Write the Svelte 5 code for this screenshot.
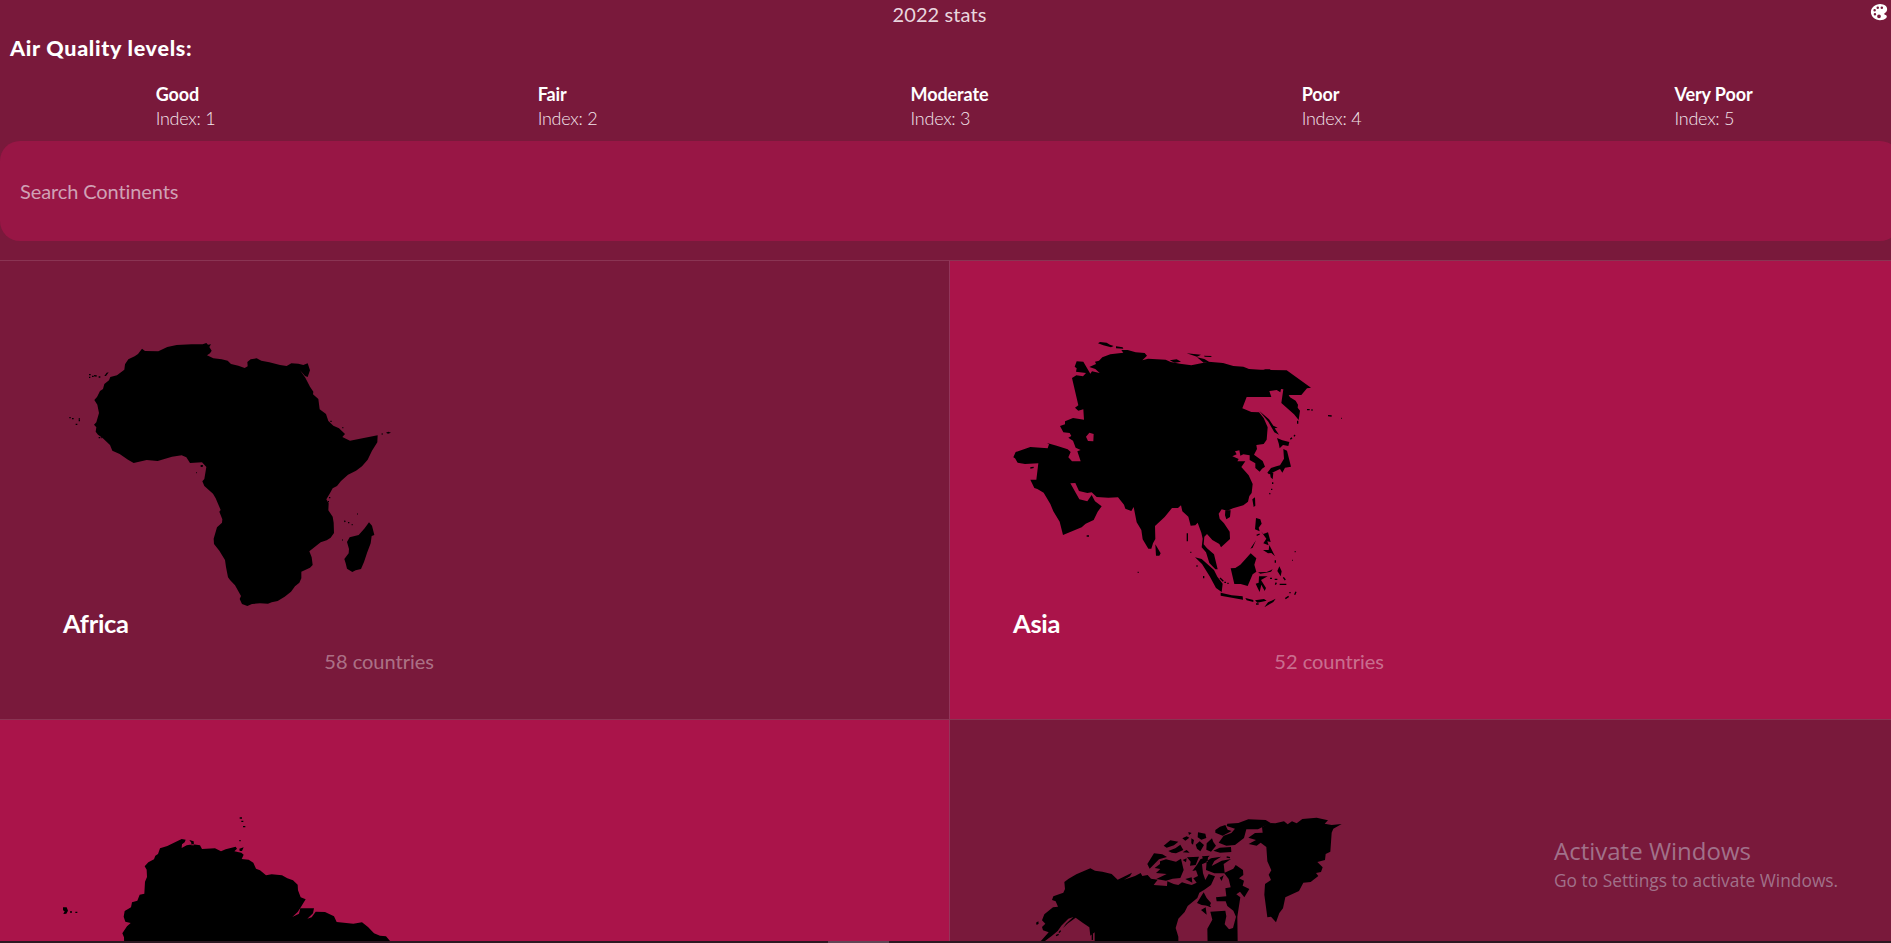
<script>
  const levels = [
    { name: 'Good', index: 1 },
    { name: 'Fair', index: 2 },
    { name: 'Moderate', index: 3 },
    { name: 'Poor', index: 4 },
    { name: 'Very Poor', index: 5 },
  ];

  const africa =
    'M276 56L285 63L325 64L352 51L380 45L425 43L458 43L469 39L474 44L483 43L478 51L485 62L480 70L471 76L490 85L515 88L533 92L543 102L565 107L584 114L593 109L592 96L602 88L620 85L634 92L658 97L690 105L710 108L724 100L745 101L760 105L773 100L780 121L773 141L765 138L750 121L766 143L780 170L790 185L789 193L805 207L809 238L828 252L835 273L850 287L867 295L885 312L877 321L900 332L930 326L983 316L982 337L966 362L953 389L936 409L918 422L894 434L873 453L861 468L848 475L839 491L829 508L836 520L835 541L848 560L851 578L852 609L842 623L830 631L812 637L778 664L785 682L788 705L780 713L754 725L754 745L748 758L735 769L723 785L704 800L683 813L665 817L654 821L630 820L606 822L592 828L576 822L569 807L573 798L555 766L540 750L534 742L528 711L525 690L508 662L492 642L491 626L501 592L516 578L517 568L508 545L512 540L497 505L489 491L463 468L457 454L463 447L469 411L456 397L420 399L409 382L395 376L366 380L323 393L290 390L251 399L234 389L209 372L187 362L180 345L157 323L144 314L137 305L139 292L132 284L139 277L147 249L142 224L133 210L141 201L150 183L159 177L163 162L177 151L181 141L201 136L223 119L225 103L235 88L254 79L264 72ZM957 577L966 587L973 615L965 618L962 640L951 669L942 696L933 717L917 721L907 726L891 716L887 700L883 687L896 670L897 657L891 636L899 622L926 615L944 595ZM1008 308L1015 305L1023 308L1014 311ZM163 138L170 128L176 127L168 138ZM452 405l7 0l-1 6l-6 0z';
  const africaSpecks =
    'M117 134h5M117 142h4M126 139h5M132 137l8 1M146 141h5M58 263h4M66 266h5M86 267h4M86 272h4M77 283h5M995 312h3M841 274h4M877 293h3M146 323h5M154 323h3M439 428h2M837 503h4M834 515h3M883 572l3 3M894 578h4M905 584h3M922 552h2M877 630h2';

  const asia =
    'M860 121L933 173L921 175L904 195L866 195L870 202L887 212L894 224L893 233L900 242L896 270L882 253L844 219L850 178L843 177L841 187L830 180L808 183L814 201L740 201L727 235L754 246L777 247L791 264L803 292L800 329L791 342L769 345L771 357L762 374L788 393L795 410L786 416L779 425L766 414L766 400L749 390L749 376L730 373L721 377L718 361L705 364L710 373L697 379L716 387L712 394L736 394L724 411L746 436L758 462L755 489L748 498L744 515L730 526L699 535L682 542L665 538L656 551L659 566L672 580L689 605L690 627L663 652L658 642L637 630L621 612L613 620L611 643L621 655L642 673L653 718L646 718L628 699L618 667L605 652L608 626L604 608L593 578L586 586L572 587L565 560L547 544L543 526L534 534L516 534L494 561L465 588L466 627L459 640L454 656L445 656L428 628L424 600L410 577L401 531L394 543L376 536L372 524L354 502L325 503L290 501L275 487L262 489L237 483L226 459L211 460L238 508L262 514L275 495L285 514L305 529L293 545L281 570L257 581L245 592L189 615L179 575L160 544L151 522L131 488L112 477L103 474L91 449L109 449L115 400L75 402L53 398L45 385L40 382L47 366L91 351L143 355L147 343L141 339L170 347L203 358L212 366L205 382L216 394L242 394L232 364L242 360L227 353L219 332L205 323L214 318L209 309L190 307L180 288L195 283L195 274L219 264L252 269L250 238L235 242L225 233L235 226L216 144L229 136L249 139L258 129L228 125L230 115L224 110L230 94L250 95L271 131L276 124L299 129L286 117L268 111L288 102L285 95L297 92L307 82L331 73L370 68L364 60L383 60L407 67L434 69L441 77L427 91L444 86L497 89L512 96L540 101L574 106L611 98L625 95L669 99L700 108L730 110L747 117L781 119ZM258 320L268 308L281 312L280 334L264 333Z';
  const asiaIslands =
    'M294 40L300 36L320 38L330 44L341 48L333 52L310 46ZM348 49L368 52L370 56L348 55ZM509 91L530 88L543 95L524 98ZM560 70L603 74L591 80ZM612 77L636 78L632 81L614 80ZM591 82L613 87L627 95L611 98ZM790 118L811 118L810 125ZM778 243L807 268L820 287L833 293L824 295L837 314L823 307L805 275ZM831 324L847 331L868 336L865 348L849 345L839 355L836 340ZM850 357L861 362L873 410L855 413L847 428L840 417L807 433L802 428L813 414L829 409L840 406L852 386ZM810 430l10 -2l-2 20l-6 -6zM757 508l8 -6l1 25l-5 4zM676 541l16 0l-2 20l-11 7l-4 -12zM768 564L781 568L785 581L776 593L779 604L765 598ZM783 604L790 612L804 607L812 636L802 634L806 646L790 640L799 626ZM768 631L751 656L758 653ZM808 645L825 679L814 669L804 670L789 660L806 660ZM466 643L482 670L478 677L468 677ZM585 682L605 687L642 720L652 740L668 761L665 786L648 774L629 739L606 702ZM662 788L695 796L728 799L729 809L704 805L662 797ZM752 670L769 685L763 704L769 725L758 733L743 768L722 762L703 762L692 715L706 714L721 704L736 688ZM774 727L800 726L818 718L813 725L781 731ZM777 739L803 739L783 750L798 774L794 783L784 764L779 786L774 776L767 761L776 758ZM736 804L760 810L760 816L740 811ZM765 811L792 807L800 812L772 818ZM793 832L804 817L827 806L820 816ZM838 709l7 15l-3 15l-10 -16z';
  const asiaSpecks =
    'M921 239h8M934 240h4M984 257l11 1M1023 265h2M871 328l5 -5M882 319l3 -4M893 272v9M91 414l10 -2M260 618h7M413 727h3M818 457v5M815 476v4M808 492l3 -2M571 667h3M589 708h4M611 738v7M562 610v24M660 744l10 10M673 757h5M682 760h4M884 665h3M876 691h2M826 691v7M810 745h6M824 748h8M829 758l-3 6M839 763h20M850 742l6 8M856 806l10 -7M868 788h4M888 785l-4 9M768 822h8M770 616l9 -4';

  const southAmerica =
    'M425 117L437 119L434 127L426 133L425 144L440 136L459 133L480 136L486 147L525 145L543 154L557 148L587 140L591 146L583 154L604 158L611 164L605 177L626 179L640 188L648 206L660 211L678 226L695 223L726 226L742 235L759 241L773 254L774 271L782 292L797 298L781 324L773 336L757 351L777 341L781 325L822 325L819 340L802 356L815 352L827 335L855 336L882 349L890 366L940 371L966 367L984 381L1002 400L1020 407L1038 409L1050 423L1050 500L254 500L252 412L247 400L261 379L272 369L256 365L251 350L254 333L273 322L276 307L292 302L299 284L313 281L315 245L321 231L320 209L314 199L325 187L342 178L346 167L354 162L360 145L382 138ZM448 120L461 124L462 136L454 136L454 128ZM598 146L611 142L606 153L599 153ZM69 322L80 322L84 332L79 341L70 342L74 334L69 331Z';
  const southSpecks = 'M599 54h7M604 64h6M609 80h7M598 122h4M90 336h6M106 337h6';

  const northAmerica =
    'M211 205L225 212L247 215L275 222L293 239L310 231L336 218L330 229L312 239L345 228L362 219L367 228L383 225L393 236L413 239L401 255L441 258L442 244L461 252L475 255L486 247L500 251L515 255L530 248L520 235L534 228L528 211L517 213L532 193L541 178L564 169L563 185L546 193L549 220L556 240L566 222L585 229L573 255L553 269L538 278L532 294L503 318L494 336L475 356L467 384L475 410L476 500L224 500L224 397L211 407L208 382L189 369L167 353L144 370L129 384L138 371L160 351L145 356L124 377L113 393L95 408L70 427L62 424L86 397L69 391L66 381L76 371L66 361L73 343L99 322L114 320L107 304L96 300L100 289L130 278L135 267L133 246L146 236L169 223Z M571 335L616 332L619 349L614 373L627 388L639 384L648 350L640 332L622 318L617 304L590 304L588 292L619 289L616 265L632 262L626 237L613 220L583 220L558 210L560 184L573 175L603 170L583 183L575 198L605 182L633 177L611 192L614 218L640 206L647 195L669 210L670 225L657 235L672 242L668 257L688 267L673 292L660 275L649 283L661 292L652 350L654 500L564 500L562 386L577 359ZM747 69L766 70L792 64L803 73L816 64L830 70L847 57L890 53L924 61L914 71L935 75L965 72L940 86L935 98L931 155L917 162L915 180L892 186L908 202L903 216L888 219L895 228L872 246L850 248L837 273L796 292L789 325L778 339L768 367L753 350L742 352L733 284L735 252L753 240L746 224L754 211L742 184L739 141L722 128L710 137L686 132L708 120L685 113L705 99L728 98L726 82Z';
  const northIslands =
    'M655 69L685 58L737 60L752 69L714 88L679 88L672 114L645 135L619 137L596 128L611 107L634 99L645 86L620 78L622 71ZM586 90L600 80L616 75L623 89L635 93L608 107L586 98ZM382 192L402 160L427 163L441 171L417 178L389 206ZM420 184L438 178L468 185L483 176L491 210L481 234L458 236L438 242L409 237L440 222L408 219L421 207L404 204L420 192ZM431 137L451 121L475 125L462 136L440 143ZM445 153L466 145L481 134L490 150L468 160L455 158ZM487 115L500 109L508 113L496 122ZM514 115L522 120L519 134L514 130ZM534 97L556 101L559 114L544 119L533 112ZM527 134L539 124L552 135L541 154L531 146ZM488 157L500 150L509 158ZM560 130L576 115L580 126L588 137L573 155L559 149ZM599 143L633 141L634 156L600 158L580 152ZM501 172L537 170L527 195L510 197L512 185ZM546 169L569 167L552 184ZM496 237L515 232L517 248ZM551 277L560 294L573 309L569 318L545 315L531 309ZM543 330L557 322L560 344ZM599 233L611 226L605 243ZM488 180l12 -5l-2 12zM505 96l10 3l-8 6zM48 368l7 -4l1 7l-6 4z';
  const northSpecks = 'M108 407l8 -4M117 398l5 -6M217 400v20M560 315l12 5M620 171l10 2';

  const continents = [
    { name: 'Africa', countries: 58, box: '39 0 1041 831', land: africa, islands: '', specks: africaSpecks },
    { name: 'Asia', countries: 52, box: '39 0 1041 831', land: asia, islands: asiaIslands, specks: asiaSpecks },
    { box: '69 -33 1041 831', land: southAmerica, islands: '', specks: southSpecks },
    { box: '-21 -33 1041 831', land: northAmerica, islands: northIslands, specks: northSpecks },
  ];
</script>

<div class="screen">
  <div class="page">
    <header>
      <span class="stats">2022 stats</span>
      <svg class="palette" viewBox="0 0 512 512" aria-hidden="true">
        <path d="M441 336.2l-.06-.05c-9.93-9.18-22.78-11.34-32.16-12.92l-.69-.12c-9.05-1.49-10.48-2.5-14.58-6.17-2.44-2.17-5.35-5.65-5.35-9.94s2.91-7.77 5.34-9.94l30.28-26.87c25.92-22.91 40.2-53.66 40.2-86.59s-14.25-63.68-40.2-86.6c-35.89-31.59-85-49-138.37-49C223.72 48 162 71.37 116 112.11c-43.87 38.77-68 90.71-68 146.24s24.16 107.47 68 146.23c21.75 19.24 47.49 34.18 76.52 44.42a266.17 266.17 0 0086.87 15h1.81c61 0 119.09-20.57 159.39-56.4 9.7-8.56 15.15-20.83 15.34-34.56.21-14.17-5.37-27.95-14.93-36.84zM112 208a32 32 0 1132 32 32 32 0 01-32-32zm40 135a32 32 0 1132-32 32 32 0 01-32 32zm40-199a32 32 0 1132 32 32 32 0 01-32-32zm64 271a48 48 0 1148-48 48 48 0 01-48 48zm72-239a32 32 0 1132-32 32 32 0 01-32 32z" />
      </svg>
    </header>

    <h1>Air Quality levels:</h1>
    <ul class="levels">
      {#each levels as level}
        <li>
          <div>
            <strong>{level.name}</strong>
            <span>Index: {level.index}</span>
          </div>
        </li>
      {/each}
    </ul>

    <input type="text" placeholder="Search Continents" />

    <main>
      {#each continents as c}
        <section>
          <svg class="map" viewBox={c.box} aria-hidden="true">
            <path fill-rule="evenodd" d={c.land} />
            <path d={c.islands} />
            <path class="specks" d={c.specks} />
          </svg>
          {#if c.name}
            <h2>{c.name}</h2>
            <p>{c.countries} countries</p>
          {/if}
        </section>
      {/each}
    </main>
  </div>

  <aside>
    <b>Activate Windows</b>
    <span>Go to Settings to activate Windows.</span>
  </aside>
  <div class="taskbar"><i></i></div>
</div>

<style>
  :global(body) {
    margin: 0;
    background: #79193b;
  }
  .screen {
    position: relative;
    height: 943px;
    overflow: hidden;
    background: #79193b;
    color: #fff;
    font-family: Lato, 'Liberation Sans', sans-serif;
  }
  .page {
    width: 1899px;
  }
  header {
    display: flex;
    align-items: flex-start;
    width: 1889px;
    height: 34px;
  }
  .stats {
    flex: 1;
    box-sizing: border-box;
    padding: 2px 0 0 10px;
    text-align: center;
    font-size: 20px;
    line-height: 25px;
    letter-spacing: 0.1px;
    color: #e9d5de;
  }
  .palette {
    width: 20px;
    height: 20px;
    margin-top: 2px;
    fill: #fff;
  }
  h1 {
    margin: 0 0 0 10px;
    height: 48px;
    font-size: 21.5px;
    font-weight: 900;
    line-height: 29px;
    letter-spacing: 0.7px;
  }
  .levels {
    display: grid;
    grid-template-columns: repeat(5, 371px);
    column-gap: 11px;
    height: 59px;
    margin: 0;
    padding: 0;
    list-style: none;
  }
  .levels li {
    display: flex;
    justify-content: center;
  }
  .levels strong,
  .levels span {
    display: block;
    font-size: 18px;
    line-height: 24px;
  }
  .levels strong {
    padding-top: 1px;
    line-height: 23px;
    letter-spacing: -0.1px;
  }
  .levels span {
    font-weight: 300;
    letter-spacing: -0.25px;
    color: #f3e6eb;
  }
  input {
    display: block;
    box-sizing: border-box;
    width: 1900px;
    height: 100px;
    margin: 0 0 19px;
    padding: 0 20px;
    border: 0;
    border-radius: 20px;
    outline: 0;
    background: #981645;
    color: #fff;
    font: 20px Lato, 'Liberation Sans', sans-serif;
    letter-spacing: -0.1px;
  }
  input::placeholder {
    color: #d0a1b5;
    opacity: 1;
  }
  main {
    display: grid;
    grid-template-columns: 949px 950px;
    grid-auto-rows: 459px;
  }
  section {
    box-sizing: border-box;
    padding: 69px 0 0 63px;
    border-top: 1px solid #8a3453;
    background: #79193b;
  }
  section:nth-child(even) {
    padding-left: 63px;
    border-left: 1px solid #93355a;
  }
  section:nth-child(2),
  section:nth-child(3) {
    background: #aa144a;
  }
  .map {
    display: block;
    width: 347px;
    height: 277px;
    overflow: visible;
  }
  .specks {
    fill: none;
    stroke: #000;
    stroke-width: 4;
  }
  h2 {
    margin: 0;
    padding-top: 1px;
    font-size: 25.5px;
    font-weight: 700;
    line-height: 31px;
    letter-spacing: -0.3px;
  }
  p {
    width: 371px;
    margin: 10px 0 0;
    text-align: right;
    font-size: 20px;
    line-height: 24px;
    color: rgba(255, 255, 255, 0.4);
  }
  aside {
    position: absolute;
    left: 1554px;
    top: 835px;
    color: #a1718a;
    font-family: 'Open Sans', 'Noto Sans', sans-serif;
  }
  aside b,
  aside span {
    display: block;
    white-space: nowrap;
    font-weight: 400;
  }
  aside b {
    font-size: 24px;
    line-height: 32px;
  }
  aside span {
    font-size: 17.35px;
    line-height: 26px;
  }
  .taskbar {
    position: absolute;
    left: 0;
    right: 0;
    bottom: 0;
    height: 2px;
    background: #2c1922;
  }
  .taskbar i {
    display: block;
    width: 61px;
    height: 2px;
    margin-left: 828px;
    background: #5f4655;
  }
</style>
